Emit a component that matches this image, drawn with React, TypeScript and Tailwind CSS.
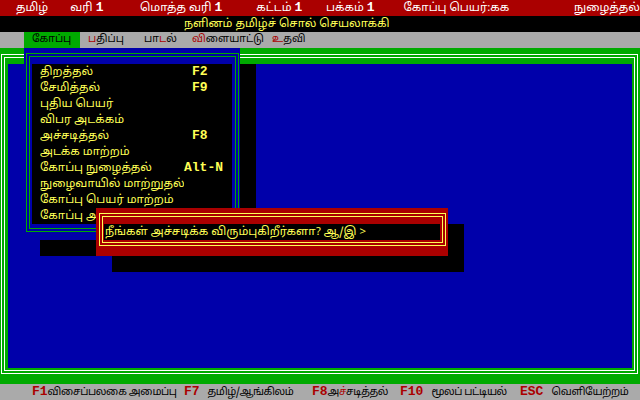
import React from "react";

const MENU = [
  { label: "திறத்தல்", key: "F2", pad: "pl-2" },
  { label: "சேமித்தல்", key: "F9", pad: "pl-2" },
  { label: "புதிய பெயர்", key: "", pad: "" },
  { label: "விபர அடக்கம்", key: "", pad: "" },
  { label: "அச்சடித்தல்", key: "F8", pad: "pl-2" },
  { label: "அடக்க மாற்றம்", key: "", pad: "" },
  { label: "கோப்பு நுழைத்தல்", key: "Alt-N", pad: "pl-0" },
  { label: "நுழைவாயில் மாற்றுதல்", key: "", pad: "" },
  { label: "கோப்பு பெயர் மாற்றம்", key: "", pad: "" },
  { label: "கோப்பு அழித்தல்", key: "", pad: "" },
];

const mono = "font-['Liberation_Mono',monospace] font-bold text-[13px] tracking-normal";

function StatusBar() {
  return (
    <div className="flex h-4 items-center whitespace-nowrap bg-[#aa0000] pl-4 text-[11.5px] leading-4 text-white">
      <span className="w-[56px]">தமிழ்</span>
      <span className="w-[72px]">
        வரி <span className={mono}>1</span>
      </span>
      <span className="w-[120px]">
        மொத்த வரி <span className={mono}>1</span>
      </span>
      <span className="w-[72px]">
        கட்டம் <span className={mono}>1</span>
      </span>
      <span className="w-[80px]">
        பக்கம் <span className={mono}>1</span>
      </span>
      <span className="w-[176px]">கோப்பு பெயர்:கக</span>
      <span>நுழைத்தல்</span>
    </div>
  );
}

function MenuBar() {
  return (
    <div className="flex h-4 items-center whitespace-nowrap bg-[#aaaaaa] text-[10.5px] leading-4 text-black">
      <span className="ml-6 w-[56px] bg-[#00aa00] pl-2">கோப்பு</span>
      <span className="w-[56px] pl-2">
        <span className="text-[#aa0000]">ப</span>திப்பு
      </span>
      <span className="w-[48px] pl-2">
        பா<span className="text-[#aa0000]">ட</span>ல்
      </span>
      <span className="w-[80px] pl-2">
        <span className="text-[#aa0000]">வி</span>ளையாட்டு
      </span>
      <span className="pl-2">
        <span className="text-[#aa0000]">உ</span>தவி
      </span>
    </div>
  );
}

function FileMenu() {
  return (
    <div className="absolute left-6 top-12 flex h-[192px] w-[216px] flex-col bg-[#0000aa] pb-2 pl-[2px] pr-[1px] pt-[5px]">
      <div className="flex flex-1 flex-col border border-[#00aa00] p-[2px]">
        <div className="flex flex-1 flex-col border border-[#00aa00] pb-[4px] pl-[2px] pr-[3px] pt-[7px]">
          <div className="flex flex-1 flex-col bg-black pl-2 text-[11.5px] leading-4 text-[#ffff55]">
            {MENU.map((item) => (
              <div key={item.label} className="flex h-4 items-center whitespace-nowrap">
                <span className="w-[144px] overflow-hidden">{item.label}</span>
                {item.key && <span className={`${item.pad} ${mono}`}>{item.key}</span>}
              </div>
            ))}
          </div>
        </div>
      </div>
    </div>
  );
}

function PrintDialog() {
  return (
    <div className="absolute left-24 top-[208px] flex h-12 w-[352px] flex-col bg-[#aa0000] pb-[10px] pl-[3px] pr-[2px] pt-[5px]">
      <div className="flex flex-1 flex-col border border-[#ffff55] p-[2px]">
        <div className="flex flex-1 flex-col border border-[#ffff55] pb-[2px] pl-[1px] pr-[2px] pt-[7px]">
          <div className="flex h-4 items-center whitespace-nowrap bg-black pl-[1px] text-[11.5px] leading-4 text-[#ffff55]">
            நீங்கள் அச்சடிக்க விரும்புகிறீர்களா? ஆ/இ &gt;
          </div>
        </div>
      </div>
    </div>
  );
}

function KeyBar() {
  const key = `${mono} text-[#aa0000]`;
  return (
    <div className="flex h-4 items-center whitespace-nowrap bg-[#aaaaaa] pl-8 text-[10.5px] leading-4 tracking-[-0.4px] text-black">
      <span className="w-[152px]">
        <span className={key}>F1</span>விசைப்பலகை அமைப்பு
      </span>
      <span className="w-[128px]">
        <span className={key}>F7</span>
        <span className="ml-2">தமிழ்/ஆங்கிலம்</span>
      </span>
      <span className="w-[88px]">
        <span className={key}>F8</span>அ<span className="text-[#aa0000]">ச்</span>சடித்தல்
      </span>
      <span className="w-[120px]">
        <span className={key}>F10</span>
        <span className="ml-2">மூலப் பட்டியல்</span>
      </span>
      <span>
        <span className={key}>ESC</span>
        <span className="ml-2">வெளியேற்றம்</span>
      </span>
    </div>
  );
}

export default function App() {
  return (
    <div className="relative flex h-[400px] w-[640px] flex-col overflow-hidden bg-black font-['Noto_Sans_Tamil','Lohit_Tamil','Noto_Sans',sans-serif]">
      <StatusBar />
      <div className="h-4 whitespace-nowrap bg-black pl-[184px] text-[11.5px] leading-4 text-[#ffff55]">
        நளினம் தமிழ்ச் சொல் செயலாக்கி
      </div>
      <MenuBar />

      {/* editing window */}
      <div className="flex flex-1 flex-col bg-[#00aa00] pb-[10px] pl-[1px] pr-[2px] pt-[6px]">
        <div className="flex flex-1 flex-col border border-white p-[2px]">
          <div className="flex flex-1 flex-col border border-white pb-[2px] pl-[3px] pr-[2px] pt-[6px]">
            <div className="flex-1 bg-[#0000aa]" />
          </div>
        </div>
      </div>

      <KeyBar />

      {/* shadows */}
      <div className="absolute left-[240px] top-16 h-[192px] w-4 bg-black" />
      <div className="absolute left-10 top-[240px] h-4 w-[216px] bg-black" />
      <div className="absolute left-[448px] top-[224px] h-12 w-4 bg-black" />
      <div className="absolute left-28 top-[256px] h-4 w-[352px] bg-black" />

      <FileMenu />
      <PrintDialog />
    </div>
  );
}
